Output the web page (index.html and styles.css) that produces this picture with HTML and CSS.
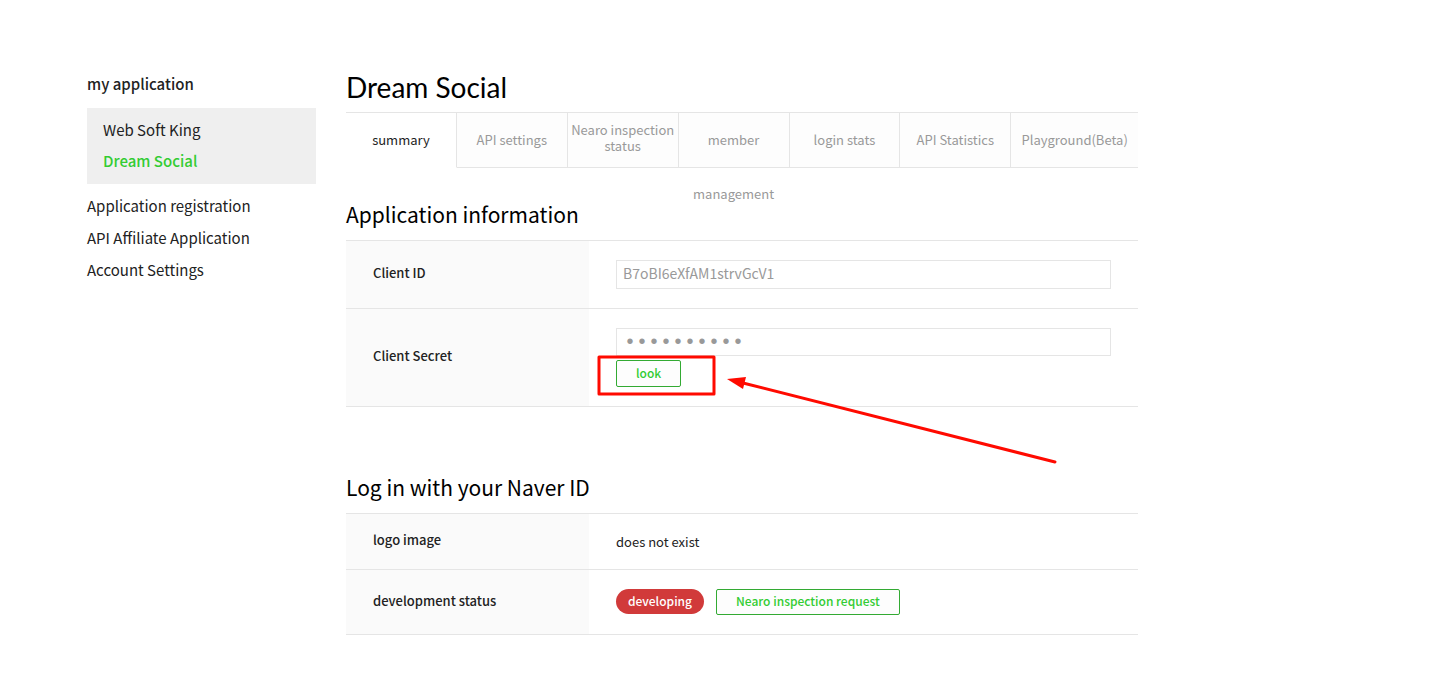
FILE: index.html
```html
<!DOCTYPE html>
<html lang="en">
<head>
    <meta charset="UTF-8">
    <meta name="viewport" content="width=device-width, initial-scale=1.0">
    <title>Dream Social</title>
    <link rel="stylesheet" href="styles.css">
</head>
<body>
    <div class="container">
        <nav class="sidebar">
            <h2>my application</h2>
            <ul class="app-list">
                <li><a href="#">Web Soft King</a></li>
                <li><a href="#" class="active">Dream Social</a></li>
            </ul>
            <ul class="menu">
                <li><a href="#">Application registration</a></li>
                <li><a href="#">API Affiliate Application</a></li>
                <li><a href="#">Account Settings</a></li>
            </ul>
        </nav>

        <main class="content">
            <h1>Dream Social</h1>
            <ul class="tabs">
                <li class="active"><a href="#">summary</a></li>
                <li><a href="#">API settings</a></li>
                <li class="two-line"><a href="#">Nearo inspection status</a></li>
                <li><a href="#">member management</a></li>
                <li><a href="#">login stats</a></li>
                <li><a href="#">API Statistics</a></li>
                <li><a href="#">Playground(Beta)</a></li>
            </ul>

            <section>
                <h3>Application information</h3>
                <table class="info">
                    <tr>
                        <th scope="row"><label for="clientId">Client ID</label></th>
                        <td><input type="text" id="clientId" value="B7oBI6eXfAM1strvGcV1" readonly></td>
                    </tr>
                    <tr>
                        <th scope="row"><label for="clientSecret">Client Secret</label></th>
                        <td>
                            <input type="password" id="clientSecret" value="abcdefghij" readonly>
                            <button type="button" class="btn btn-look">look</button>
                            <svg class="pointer" width="470" height="120" viewBox="0 0 470 120" aria-hidden="true">
                                <rect x="2" y="2" width="115" height="37" fill="none" stroke="#ff0a00" stroke-width="3" stroke-linejoin="round"/>
                                <path d="M458 107L146 28" stroke="#ff0a00" stroke-width="3" stroke-linecap="round"/>
                                <path d="M130 24L149 22L146 34Z" fill="#ff0a00"/>
                            </svg>
                        </td>
                    </tr>
                </table>
            </section>

            <section>
                <h3>Log in with your Naver ID</h3>
                <table class="info">
                    <tr>
                        <th scope="row">logo image</th>
                        <td>does not exist</td>
                    </tr>
                    <tr>
                        <th scope="row">development status</th>
                        <td>
                            <div class="status">
                                <span class="badge">developing</span>
                                <button type="button" class="btn">Nearo inspection request</button>
                            </div>
                        </td>
                    </tr>
                </table>
            </section>
        </main>
    </div>
</body>
</html>
```
FILE: styles.css
```css
* {
    box-sizing: border-box;
}

body {
    margin: 0;
    background-color: #fff;
    color: #222;
    font-family: "Noto Sans CJK KR", "Noto Sans", sans-serif;
    font-size: 13px;
    line-height: 17px;
}

h1, h2, h3, ul {
    margin: 0;
    padding: 0;
}

ul {
    list-style: none;
}

a {
    color: inherit;
    text-decoration: none;
}

.container {
    display: flex;
    gap: 30px;
    max-width: 1138px;
    padding: 68px 0 45px 87px;
}

.sidebar {
    flex: 0 0 229px;
    font-size: 15px;
    line-height: 32px;
}

.sidebar h2 {
    margin-bottom: 8px;
    font-size: 15px;
    font-weight: 500;
}

.app-list {
    margin-bottom: 6px;
    padding: 6px 16px 8px;
    background-color: #efefef;
    line-height: 31px;
}

.app-list .active {
    color: #3c3;
    font-weight: 500;
}

.content {
    flex: 1;
    min-width: 0;
}

h1 {
    color: #000;
    font-family: Lato, sans-serif;
    font-size: 28px;
    font-weight: normal;
    line-height: 38px;
}

.tabs {
    display: flex;
    margin: 6px 0 31px;
    border-top: 1px solid #e5e5e5;
}

.tabs li {
    flex: 0 0 14%;
    height: 55px;
    border-right: 1px solid #e5e5e5;
    border-bottom: 1px solid #e5e5e5;
    background-color: #fdfdfd;
    color: #999;
    line-height: 54px;
    text-align: center;
}

.tabs li:last-child {
    flex: 1;
    border-right: none;
}

.tabs .active {
    border-bottom-color: #fff;
    background-color: #fff;
    color: #222;
}

.tabs .two-line {
    padding-top: 9px;
    line-height: 16px;
}

h3 {
    margin-bottom: 11px;
    color: #000;
    font-size: 21px;
    font-weight: normal;
    line-height: 30px;
}

section + section {
    margin-top: 65px;
}

.info {
    width: 100%;
    border-collapse: collapse;
    table-layout: fixed;
}

.info tr {
    border-top: 1px solid #e5e5e5;
    border-bottom: 1px solid #e5e5e5;
}

.info th {
    width: 243px;
    padding: 16px 27px 20px;
    background-color: #fafafa;
    font-weight: 500;
    text-align: left;
}

.info td {
    position: relative;
    padding: 19px 27px;
}

.info input {
    display: block;
    width: 100%;
    height: 29px;
    padding: 0 6px 3px;
    border: 1px solid #e5e5e5;
    background-color: #fff;
    color: #999;
    font-family: inherit;
    font-size: 14px;
}

.info input[type="password"] {
    height: 28px;
    padding: 0 7px;
    font-family: "Liberation Mono", monospace;
    font-size: 20px;
}

.btn {
    display: block;
    height: 26px;
    padding: 0 19px 3px;
    border: 1px solid #3a3;
    border-radius: 2px;
    background-color: #fdfdfd;
    color: #3c3;
    font-family: inherit;
    font-size: 12px;
    font-weight: 500;
}

.btn-look {
    height: 27px;
    margin-top: 4px;
}

/* red frame and arrow over the look button */
.pointer {
    position: absolute;
    top: 46px;
    left: 8px;
    pointer-events: none;
}

.status {
    display: flex;
    gap: 12px;
}

.badge {
    height: 25px;
    padding: 0 12px;
    border-radius: 13px;
    background-color: #d13a3a;
    color: #fff;
    font-size: 12px;
    font-weight: 500;
    line-height: 24px;
}
```
